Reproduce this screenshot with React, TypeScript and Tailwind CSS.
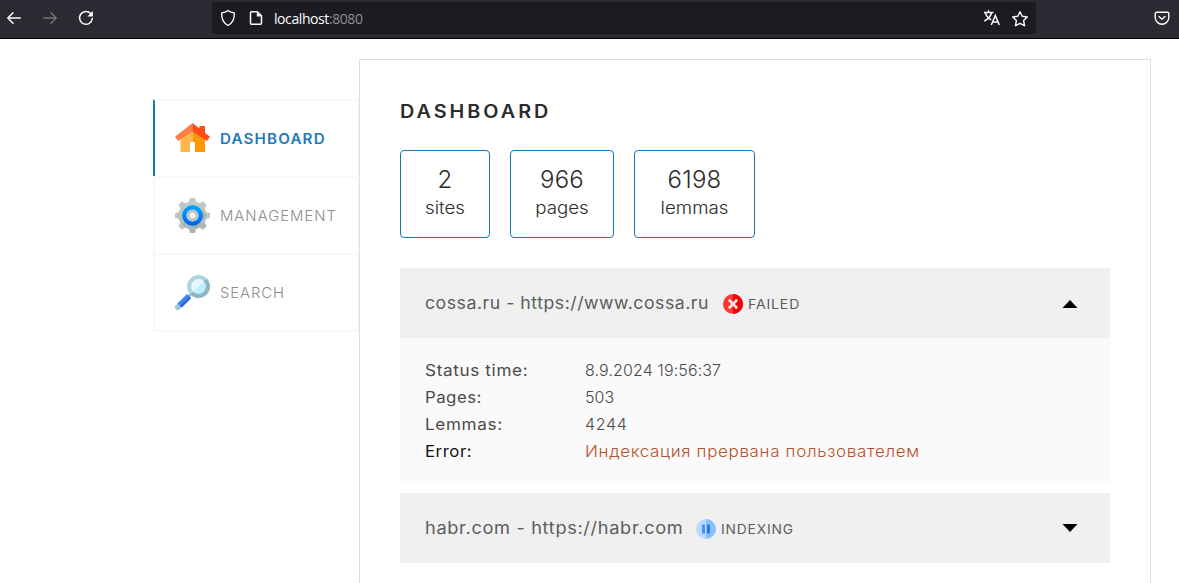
import React from "react";

function House() {
  return (
    <svg width="35" height="35" viewBox="0 0 35 35" className="shrink-0">
      <path d="M5.5 17 17.5 7v14H15v10H5.5z" fill="#ffb74d" />
      <path d="M17.5 7 30 17v14H20V21h-2.5z" fill="#ff9800" />
      <path d="M24.5 5H30v9l-5.5-5z" fill="#ff4b19" />
      <path d="M17.5 1.9v8.6L3.2 20 0 15.8z" fill="#ff7e43" />
      <path d="M17.5 1.9 35 15.8 31.8 20 17.5 10.5z" fill="#ff4b19" />
    </svg>
  );
}

function Gear() {
  const teeth = [0, 45, 90, 135, 180, 225, 270, 315];
  return (
    <svg width="35" height="35" viewBox="0 0 35 35" className="shrink-0">
      <defs>
        <linearGradient id="gear" x1="0" y1="0" x2="0" y2="1">
          <stop offset="0" stopColor="#c1cdcd" />
          <stop offset="1" stopColor="#abb6b6" />
        </linearGradient>
        <linearGradient id="ring" x1="0" y1="0" x2="0" y2="1">
          <stop offset="0" stopColor="#00a2ff" />
          <stop offset="1" stopColor="#0069f2" />
        </linearGradient>
      </defs>
      {teeth.map((a) => (
        <path key={a} d="M15 0h5l1.5 6h-8z" fill={a > 90 && a < 225 ? "#a9b4b4" : "#bdc9c9"} transform={`rotate(${a} 17.5 17.5)`} />
      ))}
      <circle cx="17.5" cy="17.5" r="14" fill="url(#gear)" />
      <path d="M25 11 31 17 22 30l-8-2z" fill="#95a2a2" opacity=".6" />
      <circle cx="17.5" cy="17.5" r="8.2" fill="#dce2e3" stroke="url(#ring)" strokeWidth="4.2" />
      <circle cx="17.5" cy="17.5" r="4.2" fill="#eef1f1" stroke="#b2bebe" strokeWidth="2" />
    </svg>
  );
}

function Magnifier() {
  return (
    <svg width="35" height="35" viewBox="0 0 35 35" className="shrink-0">
      <path d="m13 22 3.5-3.5" stroke="#8ab5bf" strokeWidth="2.2" />
      <path d="M2.8 32.2 6 29" stroke="#9bc9d4" strokeWidth="5.6" strokeLinecap="round" />
      <path d="M4.5 30.5 14 21" stroke="#3d83f2" strokeWidth="5.6" />
      <path d="M6.3 31.3 15.3 22.3" stroke="#3367d6" strokeWidth="2.4" />
      <circle cx="23.5" cy="11.5" r="9.4" fill="#e5f9ff" />
      <path d="M16.7 18.3 30.3 4.7A9.4 9.4 0 0 1 16.7 18.3z" fill="#c0f0ff" />
      <circle cx="23.5" cy="11.5" r="9.4" fill="none" stroke="#acd5df" strokeWidth="4" />
      <path d="M30.2 4.8A9.4 9.4 0 0 1 16.8 18.2" fill="none" stroke="#8eb7c1" strokeWidth="4" />
    </svg>
  );
}

function FailedIcon() {
  return (
    <svg width="20" height="20" viewBox="0 0 20 20" className="mt-0.5 shrink-0">
      <circle cx="10" cy="10" r="10" fill="#ff3636" />
      <path d="M10 0a10 10 0 0 1 0 20z" fill="#f40000" />
      <path d="m5.8 5.8 8.4 8.4M14.2 5.8l-8.4 8.4" stroke="#f4dede" strokeWidth="2.8" />
    </svg>
  );
}

function PauseIcon() {
  return (
    <svg width="20" height="20" viewBox="0 0 20 20" className="mt-0.5 shrink-0">
      <circle cx="10" cy="10" r="10" fill="#bbdaff" />
      <path d="M10 0a10 10 0 0 1 0 20z" fill="#8bc0ff" />
      <path d="M6 5.5h3v9H6z" fill="#4394fa" />
      <path d="M11 5.5h3v9h-3z" fill="#287bd8" />
    </svg>
  );
}

function BrowserBar() {
  return (
    <header className="flex h-[39px] shrink-0 items-start border-b border-black bg-[#2b2a33] text-[#fbfbfe]">
      <div className="flex h-9 w-[212px] items-center gap-5 pl-1.5">
        <svg width="16" height="16" viewBox="0 0 16 16" fill="none" stroke="currentColor" strokeWidth="1.5" strokeLinecap="round" strokeLinejoin="round"><path d="M14.3 8H1.8M7 2.8 1.8 8 7 13.2" /></svg>
        <svg width="16" height="16" viewBox="0 0 16 16" fill="none" stroke="#76757a" strokeWidth="1.5" strokeLinecap="round" strokeLinejoin="round"><path d="M1.7 8h12.5M9 2.8 14.2 8 9 13.2" /></svg>
        <svg width="16" height="16" viewBox="0 0 16 16" fill="none" stroke="currentColor" strokeWidth="1.5" strokeLinecap="round"><path d="M12.7 3.6A6.4 6.4 0 1 0 14.3 8.5" /><path d="M14.9 1v5.5H9.4z" fill="currentColor" stroke="none" /></svg>
      </div>
      <div className="mt-0.5 flex h-8 w-[824px] items-center rounded bg-[#1c1b22] px-2">
        <svg width="16" height="18" viewBox="0 0 16 18" fill="none" stroke="currentColor" strokeWidth="1.4" strokeLinejoin="round"><path d="M8 1.5c2 1.6 4 2.1 6.3 2.4.3 5.7-1.2 10-6.3 12.6C2.9 13.9 1.4 9.6 1.7 3.9 4 3.6 6 3.1 8 1.5z" /></svg>
        <svg width="16" height="16" viewBox="0 0 16 16" className="ml-3" fill="none" stroke="currentColor" strokeWidth="1.5" strokeLinejoin="round"><path d="M3.5 1.7h5.8l4.2 4.2v7.2a1.2 1.2 0 0 1-1.2 1.2H3.7a1.2 1.2 0 0 1-1.2-1.2V2.7a1 1 0 0 1 1-1z" /><path d="M8.8 1.7v4.7h4.7z" fill="currentColor" stroke="none" /></svg>
        <span className="ml-2.5 mt-0.5 font-['Open_Sans',sans-serif] text-[14px] leading-5 tracking-[-0.42px]">
          localhost<span className="text-[#8e8d93]">:8080</span>
        </span>
        <svg width="18" height="16" viewBox="0 0 18 16" className="ml-auto" fill="none" stroke="currentColor" strokeWidth="1.5"><path d="M1 2.5h9.5M5.5.3v2.2M2.2 2.5c1 3.6 3.1 6 6 7.2M8.7 2.5C7.6 6.4 5.4 9 1.3 11M8.3 15l4-9.5 4 9.5M9.6 12.1H15" /></svg>
        <svg width="18" height="18" viewBox="0 0 18 18" className="ml-[10px] mr-[-1px] mt-px" fill="none" stroke="currentColor" strokeWidth="1.4" strokeLinejoin="round"><path d="m9 1.7 2.2 4.6 5.1.7-3.7 3.6.9 5.1L9 13.300l-4.500 2.400.900-5.100L1.700 7l5.100-.700z" /></svg>
      </div>
      <svg width="16" height="16" viewBox="0 0 16 16" className="ml-auto mr-[9px] mt-2.5" fill="none" stroke="currentColor" strokeWidth="1.4" strokeLinecap="round" strokeLinejoin="round"><path d="M2.7 2.2h10.6a1.5 1.5 0 0 1 1.5 1.5v3.7a6.8 6.8 0 0 1-13.6 0V3.7a1.5 1.5 0 0 1 1.5-1.5zM5 6.4l3 2.9 3-2.9" /></svg>
    </header>
  );
}

function Sidebar() {
  return (
    <nav className="mt-[60px] flex h-[233px] w-[206px] shrink-0 flex-col text-[14px]">
      <div className="flex h-[77px] items-center gap-[10px] border-x-2 border-t-2 border-[#f8f8f8] border-l-[#1777b5] pl-5 font-semibold text-[#1a7bb9]">
        <House />
        <span className="origin-left scale-x-[1.08] tracking-[1.1px]">DASHBOARD</span>
      </div>
      <div className="flex h-[77px] items-center gap-[10px] border-x-2 border-t-2 border-[#f8f8f8] pl-5 font-light text-[#8c8c8c]">
        <Gear />
        <span className="origin-left scale-x-[1.06] tracking-[0.95px]">MANAGEMENT</span>
      </div>
      <div className="flex h-[79px] items-center gap-[10px] border-2 border-[#f8f8f8] pl-5 font-light text-[#8c8c8c]">
        <Magnifier />
        <span className="origin-left scale-x-[1.06] tracking-[0.85px]">SEARCH</span>
      </div>
    </nav>
  );
}

function Stat({ value, label }: { value: string; label: string }) {
  return (
    <div className="h-full pt-3.5">
      <div className="text-[24px] font-light leading-[30px] tracking-[0.2px]">{value}</div>
      <div className="scale-x-[1.1] text-[17px] font-light leading-[27px]">{label}</div>
    </div>
  );
}

function Arrow({ up }: { up?: boolean }) {
  return (
    <svg width="16" height="8" viewBox="0 0 16 8" className={up ? "ml-auto mr-8 mt-0.5" : "ml-auto mr-8"}>
      <path d={up ? "M8 0 15.5 8H.5z" : "M.5 0h15L8 8z"} />
    </svg>
  );
}

export default function App() {
  return (
    <div className="flex h-[583px] w-[1179px] flex-col overflow-hidden bg-white font-[Inter,sans-serif] text-[#2b2b2b]">
      <BrowserBar />
      <div className="flex min-h-0 flex-1 pl-[153px]">
        <Sidebar />
        <main className="mt-5 h-[560px] w-[792px] border border-[#dedede] px-10 pt-9">
          <h1 className="h-[30px] origin-left scale-x-[1.1] whitespace-nowrap text-[18px] font-semibold leading-[31px] tracking-[2.72px]">DASHBOARD</h1>
          <section className="mt-6 flex gap-5 text-center">
            <div className="h-[88px] w-[90px] rounded border border-[#1777b5]"><Stat value="2" label="sites" /></div>
            <div className="h-[88px] w-[104px] rounded border border-[#1777b5]"><Stat value="966" label="pages" /></div>
            <div className="h-[88px] w-[121px] rounded border border-[#1777b5]"><Stat value="6198" label="lemmas" /></div>
          </section>
          <section className="mt-[30px] w-[710px]">
            <div className="flex h-[70px] items-center whitespace-nowrap bg-[#f0f0f0] pl-[25px] text-[#5c5c5c]">
              <span className="w-[298px] origin-left scale-x-[1.04] pt-px text-[17px] tracking-[0.5px]">cossa.ru - https://www.cossa.ru</span>
              <FailedIcon />
              <span className="ml-[5px] mt-[3px] origin-left scale-x-[1.08] text-[13px] tracking-[0.8px]">FAILED</span>
              <Arrow up />
            </div>
            <dl className="grid h-[145px] grid-cols-[160px_1fr] content-start whitespace-nowrap bg-[#fafafa] pl-[25px] pt-[19px] text-[16px] leading-[27px] text-[#4a4a4a]">
              <dt className="origin-left scale-x-[1.07] tracking-[0.6px]">Status time:</dt>
              <dd className="font-light tracking-[0.12px]">8.9.2024 19:56:37</dd>
              <dt className="origin-left scale-x-[1.05] tracking-[0.45px]">Pages:</dt>
              <dd className="font-light tracking-[0.12px]">503</dd>
              <dt className="origin-left scale-x-[1.07] tracking-[0.6px]">Lemmas:</dt>
              <dd className="font-light tracking-[0.7px]">4244</dd>
              <dt className="origin-left scale-x-[1.05] tracking-[0.5px] text-[#111]">Error:</dt>
              <dd className="origin-left scale-x-[1.06] font-light tracking-[0.64px] text-[#b8502b]">Индексация прервана пользователем</dd>
            </dl>
            <div className="mt-2.5 flex h-[70px] items-center whitespace-nowrap bg-[#f0f0f0] pl-[25px] text-[#5c5c5c]">
              <span className="w-[271px] origin-left scale-x-[1.07] pt-px text-[17px] tracking-[0.62px]">habr.com - https://habr.com</span>
              <PauseIcon />
              <span className="ml-[5px] mt-[3px] origin-left scale-x-[1.06] text-[13px] tracking-[0.8px]">INDEXING</span>
              <Arrow />
            </div>
          </section>
        </main>
      </div>
    </div>
  );
}
